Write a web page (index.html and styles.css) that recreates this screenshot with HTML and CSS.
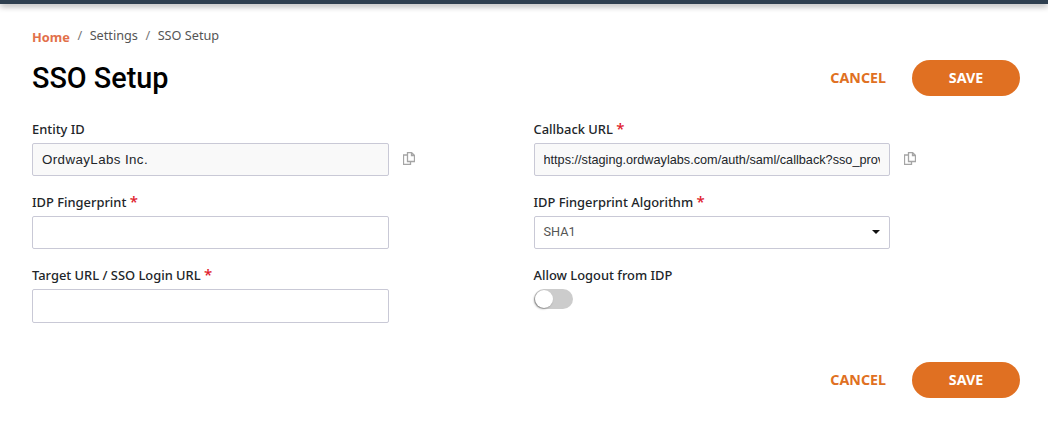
FILE: index.html
```html
<!DOCTYPE html>
<html lang="en">
<head>
    <meta charset="UTF-8">
    <meta name="viewport" content="width=device-width, initial-scale=1.0">
    <title>SSO Setup</title>
    <link rel="stylesheet" href="styles.css">
</head>
<body>
    <div class="top-bar"></div>
    <main class="page">
        <nav class="breadcrumb">
            <a class="crumb-home">Home</a>
            <span class="crumb-sep">/</span>
            <span>Settings</span>
            <span class="crumb-sep">/</span>
            <span>SSO Setup</span>
        </nav>

        <div class="title-row">
            <h1>SSO Setup</h1>
            <div class="actions">
                <button class="cancel">CANCEL</button>
                <button class="save">SAVE</button>
            </div>
        </div>

        <form class="form-grid">
            <div class="field">
                <label>Entity ID</label>
                <div class="input-row">
                    <input class="text-input readonly" type="text" value="OrdwayLabs Inc." readonly>
                    <svg class="copy-icon" viewBox="0 0 12 13"><path d="M4.500 .5h4l3 3v6h-7z M8.500 .5v3h3 M4.500 3h-4v9.500h7v-3"/></svg>
                </div>
            </div>
            <div class="field">
                <label>Callback URL <span class="req">*</span></label>
                <div class="input-row">
                    <input class="text-input readonly url" type="text" value="https://staging.ordwaylabs.com/auth/saml/callback?sso_provider=ordwaylabs" readonly>
                    <svg class="copy-icon" viewBox="0 0 12 13"><path d="M4.500 .5h4l3 3v6h-7z M8.500 .5v3h3 M4.500 3h-4v9.500h7v-3"/></svg>
                </div>
            </div>
            <div class="field">
                <label>IDP Fingerprint <span class="req">*</span></label>
                <div class="input-row">
                    <input class="text-input" type="text">
                </div>
            </div>
            <div class="field">
                <label>IDP Fingerprint Algorithm <span class="req">*</span></label>
                <div class="input-row">
                    <div class="text-input select">
                        <span>SHA1</span>
                        <span class="caret"></span>
                    </div>
                </div>
            </div>
            <div class="field">
                <label>Target URL / SSO Login URL <span class="req">*</span></label>
                <div class="input-row">
                    <input class="text-input tall" type="text">
                </div>
            </div>
            <div class="field">
                <label>Allow Logout from IDP</label>
                <div class="toggle"><span class="knob"></span></div>
            </div>
        </form>

        <div class="actions bottom">
            <button class="cancel">CANCEL</button>
            <button class="save">SAVE</button>
        </div>
    </main>
</body>
</html>
```

FILE: styles.css
```css
* {
    box-sizing: border-box;
}

body {
    margin: 0;
    background-color: #fff;
    font-family: "Noto Sans", sans-serif;
    color: #212529;
}

.top-bar {
    height: 4px;
    background-color: #2f4050;
    box-shadow: 0 2px 6px rgba(0, 0, 0, 0.4);
}

.page {
    padding: 21px 28px 0 32px;
}

.breadcrumb {
    display: flex;
    align-items: center;
    gap: 7.500px;
    height: 20px;
    font-size: 12.700px;
    color: #555;
}

.crumb-home {
    font-size: 12.800px;
    font-weight: 700;
    color: #e2704a;
    padding-top: 3px;
}

.crumb-sep {
    color: #777;
}

.title-row {
    display: flex;
    justify-content: space-between;
    align-items: center;
    margin-top: 15px;
    height: 36px;
}

h1 {
    margin: 0 0 1px;
    font-family: Roboto, sans-serif;
    font-size: 28.800px;
    font-weight: 500;
    color: #000;
}

.actions {
    display: flex;
    align-items: center;
    gap: 26px;
}

.actions.bottom {
    justify-content: flex-end;
    margin-top: 39px;
}

button {
    font-family: "Noto Sans", sans-serif;
    font-size: 14.250px;
    font-weight: 700;
    border: none;
    cursor: pointer;
    padding: 0 0 1px;
}

.cancel {
    background: none;
    color: #e07022;
}

.save {
    width: 108px;
    height: 36px;
    border-radius: 18px;
    background-color: #e07022;
    color: #fff;
}

.form-grid {
    display: grid;
    grid-template-columns: 501.500px 486.500px;
    row-gap: 16px;
    margin-top: 23px;
}

.field label {
    display: block;
    height: 20px;
    margin-bottom: 4px;
    font-size: 12.900px;
    font-weight: 500;
    line-height: 20px;
    color: #212529;
}

.req {
    color: #e0202c;
    font-size: 15px;
    line-height: 0;
}

.input-row {
    display: flex;
    align-items: center;
    gap: 14px;
}

.text-input {
    width: 356.600px;
    height: 33px;
    padding: 0 9px;
    border: 1px solid #c9c9d6;
    border-radius: 2px;
    background-color: #fff;
    font-family: "Liberation Sans", sans-serif;
    font-size: 13.330px;
    letter-spacing: 0.4px;
    color: #212529;
    outline: none;
}

.tall {
    height: 34px;
}

.readonly {
    background-color: #f9f9f9;
}

.url {
    font-size: 12.700px;
    letter-spacing: 0;
}

.select {
    display: flex;
    justify-content: space-between;
    align-items: center;
    padding-bottom: 2px;
    font-family: Roboto, sans-serif;
    font-size: 12.700px;
    letter-spacing: 0;
    color: #555;
}

.caret {
    width: 0;
    height: 0;
    border-left: 4px solid transparent;
    border-right: 4px solid transparent;
    border-top: 4px solid #111;
}

.copy-icon {
    width: 12px;
    height: 13px;
    margin-top: -2px;
    fill: none;
    stroke: #a5a5a5;
    stroke-width: 1.300;
}

.toggle {
    width: 39px;
    height: 20px;
    padding: 1px;
    border-radius: 10px;
    background-color: #ccc;
}

.knob {
    display: block;
    width: 18px;
    height: 18px;
    border-radius: 50%;
    background-color: #fff;
    box-shadow: -1px 1px 2px rgba(0, 0, 0, 0.35);
}
```
